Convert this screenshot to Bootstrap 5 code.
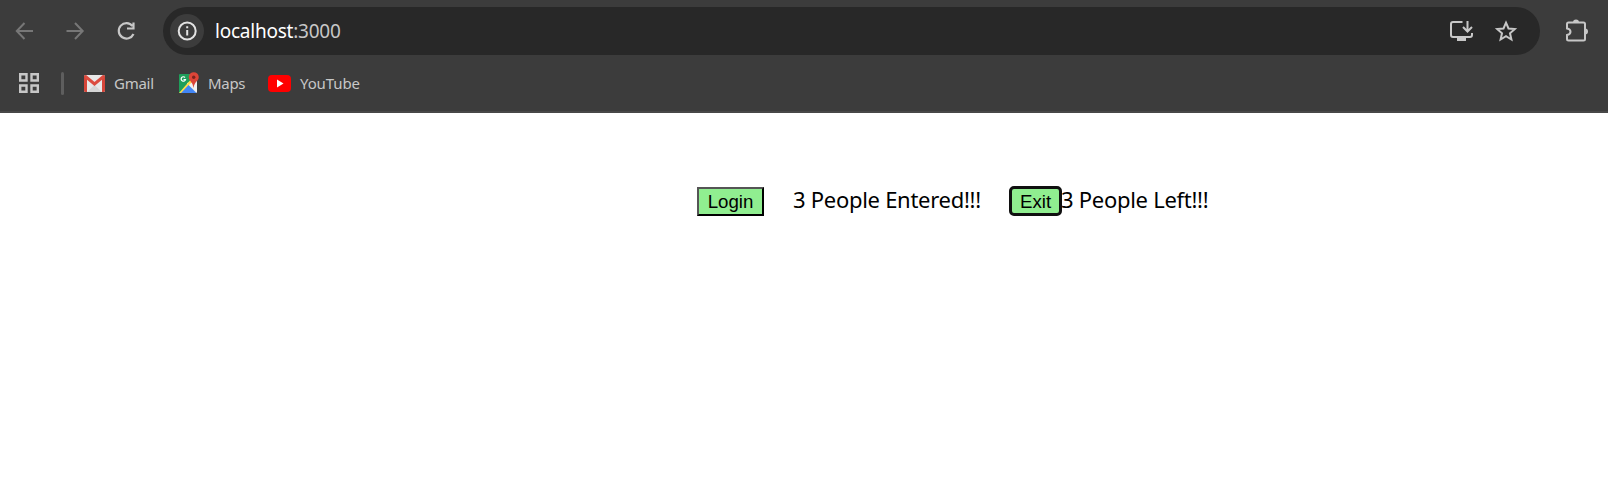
<!DOCTYPE html>
<html lang="en">
<head>
<meta charset="utf-8">
<title>localhost:3000</title>
<link href="https://cdn.jsdelivr.net/npm/bootstrap@5.3.0/dist/css/bootstrap.min.css" rel="stylesheet">
<style>
body{background:#fff;color:#000;font-family:"Noto Sans","Open Sans",sans-serif;overflow:hidden}
svg{display:block;flex:none}
.chrome{background:#3c3c3c;height:113px;border-bottom:2px solid #484848;color:#c7c7c7}
.toolbar{height:61px;padding-left:12px}
.omnibox{width:1377px;height:48px;border-radius:24px;background:#282828;margin-left:24px;padding:0 22px 0 7px}
.site-info{width:34px;height:34px;background:#3c3c3c}
.url{font-size:19px;line-height:28px;width:126px;margin-left:11px;letter-spacing:-.23px;color:#c7c7c7}
.url b{font-weight:400;color:#fff}
.bookmarks{height:44px;padding-left:19px;font-size:15px;line-height:22px}
.bookmarks>span{padding-bottom:1px}
.divider{width:3px;height:23px;border-radius:2px;background:#5e5e5e;margin:0 21px 0 22px}
.bm-label{white-space:nowrap}
.counter{padding:72px 0 0 697px;font-size:22px;line-height:28px;white-space:nowrap;letter-spacing:-.28px}
.counter span{padding-bottom:4px}
.act{font:18.7px/22px "Liberation Sans",Arial,sans-serif;letter-spacing:0;background:#90ee90;color:#000;padding:2px 0 1px;height:29px;border:2px solid #000}
.login{width:67px;border-color:#555 #000 #000 #555}
.exit{width:53px;height:30px;line-height:20px;border:3px solid #101010;border-radius:5px;margin-right:-1px}
.entered{width:187px;margin:0 29px 0 29px}
</style>
</head>
<body>
<header class="chrome">
  <nav class="toolbar d-flex align-items-center">
    <svg width="24" height="24" fill="none" stroke="#777" stroke-width="2"><path d="M21 12H5M12.500 4 4.800 12l7.700 8"/></svg>
    <svg style="margin-left:26px" width="24" height="24" fill="none" stroke="#777" stroke-width="2"><path d="M4.500 12h16M13 4l7.700 8-7.700 8"/></svg>
    <svg style="margin-left:29px" width="24" height="24" fill="none" stroke="#c7c7c7" stroke-width="2.200"><path d="M17.500 7A7.700 7.700 0 1 0 18.500 15M18.500 3.500v6h-6.500"/></svg>
    <div class="omnibox d-flex align-items-center">
      <span class="site-info rounded-circle d-flex align-items-center justify-content-center">
        <svg width="20" height="20" fill="none" stroke="#e3e3e3" stroke-width="2"><circle cx="10.200" cy="10" r="8.500"/><path d="M10.200 9v5.500M10.200 5.200v2.100"/></svg>
      </span>
      <span class="url text-nowrap"><b>localhost</b>:3000</span>
      <svg class="ms-auto" width="24" height="24" fill="none" stroke="#c7c7c7" stroke-width="2"><path d="M13.500 3H4Q2 3 2 5v11q0 2 2 2h17q2 0 2-2v-2M18.500 2v10M14 8l4.500 4.500L23 8"/><path d="M8 20.500h9" stroke-width="3"/></svg>
      <svg style="margin-left:21px" width="24" height="24" fill="none" stroke="#c7c7c7" stroke-width="2"><path d="m12 3.700 2.500 5.800 6.300.6-4.800 4.200 1.400 6.200-5.400-3.300-5.400 3.300L8 14.300l-4.800-4.200 6.300-.6z"/></svg>
    </div>
    <svg style="margin-left:24px" width="26" height="26" fill="none" stroke="#c7c7c7" stroke-width="2"><path d="M4.500 4.500H19.500q1.500 0 1.500 1.500v15q0 1.500-1.500 1.500H4.500q-1.500 0-1.500-1.500V17q3.500-.5 3.500-3.200T3 10.500v-4.500Q3 4.500 4.500 4.500z"/><path fill="#c7c7c7" stroke="none" d="M9 4.500a3 3 0 0 1 6 0zM21 10.500a3 3 0 0 1 0 6z"/></svg>
  </nav>
  <div class="bookmarks d-flex align-items-center">
    <svg width="20" height="20" fill="none" stroke="#c7c7c7" stroke-width="2.400"><path d="M1.200 1.200h6.300v6.300H1.200zM12.500 1.200h6.300v6.300h-6.300zM1.200 12.500h6.300v6.300H1.200zM12.500 12.500h6.300v6.300h-6.300z"/></svg>
    <span class="divider"></span>
    <svg style="margin-left:-1px" width="21" height="17"><rect width="21" height="17" rx="1.500" fill="#e8e8e8"/><path d="m3 17 7.500-7 7.500 7z" fill="#d5d5d5"/><path d="M0 1.500Q0 0 1.500 0L3 1v16H1.500Q0 17 0 15.500zM21 1.500Q21 0 19.500 0L18 1v16h1.500q1.500 0 1.500-1.500z" fill="#d54539"/><path d="m1.500 1.500 9 7.500 9-7.500" fill="none" stroke="#dc4c3f" stroke-width="3"/></svg>
    <span class="bm-label" style="width:40px;margin-left:9px;letter-spacing:-.25px">Gmail</span>
    <svg style="margin-left:24px" width="21" height="22" viewBox="0 0 21 22"><path d="M2 2h15v19H1V3q0-1 1-1z" fill="#1f9e5a"/><path d="M19 8v12q0 1-1 1H9V11z" fill="#e8e8e8"/><path d="M1 21 15 5l3 2L4 21z" fill="#ffdc48"/><path d="m3 21 7.500-8 8 8z" fill="#4286f5"/><path d="m11 13 5-5 3 3v9z" fill="#f2f2f2"/><path d="M7 5.500A2.200 2.200 0 1 0 7.500 7.500H5.500" fill="none" stroke="#fff" stroke-width="1.200"/><path d="M15.500 16Q15 11.500 12 8.500A5 5 0 1 1 19.500 8.500Q16 11.500 15.500 16z" fill="#dc4538"/><circle cx="15.700" cy="5.300" r="1.700" fill="#7b231e"/></svg>
    <span class="bm-label" style="width:39px;margin-left:9px;letter-spacing:-.3px">Maps</span>
    <svg style="margin-left:21px" width="23" height="17"><rect width="23" height="17" rx="4" fill="#f00"/><path d="m9 4.500 6.500 4L9 12.500z" fill="#fff"/></svg>
    <span class="bm-label" style="margin-left:9px;letter-spacing:-.1px">YouTube</span>
  </div>
</header>
<main class="counter d-flex align-items-center">
  <button class="act login">Login</button>
  <span class="entered">3 People Entered!!!</span>
  <button class="act exit">Exit</button>
  <span class="left-count">3 People Left!!!</span>
</main>
<script src="https://cdn.jsdelivr.net/npm/bootstrap@5.3.0/dist/js/bootstrap.bundle.min.js"></script>
</body>
</html>
